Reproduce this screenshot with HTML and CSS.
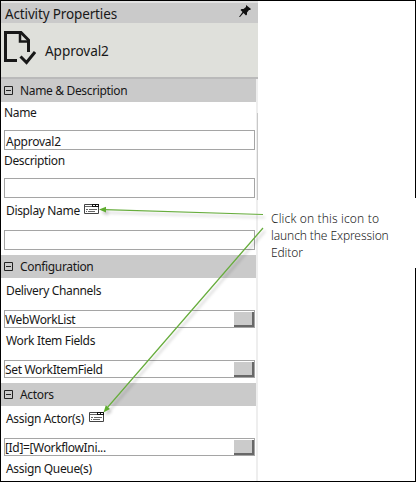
FILE: index.html
```html
<!DOCTYPE html>
<html lang="en">
<head>
<meta charset="utf-8">
<title>Activity Properties</title>
<link rel="stylesheet" href="styles.css">
</head>
<body>
<svg class="defs" width="0" height="0" aria-hidden="true">
  <symbol id="expr" viewBox="0 0 16 11">
    <path d="M.5 .5h14v9H.5z" fill="#fff" stroke="#444"/>
    <path d="M8 .5h7M8 2.500h7M8.500 0v3M11.500 0v3M14.500 0v3" stroke="#111" fill="none"/>
    <path d="M1 2.500h7M2 5.500h2M5 5.500h8M2 7.500h1M4 7.500h7" stroke="#666" fill="none"/>
  </symbol>
  <symbol id="minus" viewBox="0 0 9 9">
    <path d="M.5 .5h8v8h-8zM2 4.500h5" fill="none" stroke="#222"/>
  </symbol>
</svg>
<main class="frame">
  <section class="panel">
    <header class="titlebar">
      <h1 class="title">Activity Properties</h1>
      <svg class="pin" width="12" height="13" viewBox="0 0 12 13"><path d="M7 0l5 4-1 1-1 0-2 2.500v2L7 10.500 4.500 8 1 12 0 12 3.500 7 1.500 5l1-1h2L7 2V0z" fill="#111"/></svg>
    </header>
    <div class="activity">
      <svg class="doc" width="33" height="36" viewBox="0 0 33 36" fill="none" stroke="#181818" stroke-width="3">
        <path d="M14 30.500H2.500V2.500H18L25.500 10V22"/>
        <path d="M17 3v8.500h8" stroke-width="2.500"/>
        <path d="M17.500 26.500L23.500 32.500 32 22"/>
      </svg>
      <span class="activity-name">Approval2</span>
    </div>
    <div class="body">
      <h2 class="section"><svg class="toggle"><use href="#minus"/></svg><span>Name &amp; Description</span></h2>
      <div class="group">
        <div class="label flush"><span>Name</span></div>
        <div class="input"><span class="wide">Approval2</span></div>
        <div class="label flush"><span>Description</span></div>
        <div class="input"></div>
        <div class="label tall"><span>Display Name</span><svg class="expr"><use href="#expr"/></svg></div>
        <div class="input"></div>
      </div>
      <h2 class="section"><svg class="toggle"><use href="#minus"/></svg><span>Configuration</span></h2>
      <div class="group">
        <div class="label tall"><span>Delivery Channels</span></div>
        <div class="picker"><span>WebWorkList</span><button class="more" aria-label="More"></button></div>
        <div class="label tall"><span>Work Item Fields</span></div>
        <div class="picker"><span>Set WorkItemField</span><button class="more" aria-label="More"></button></div>
      </div>
      <h2 class="section"><svg class="toggle"><use href="#minus"/></svg><span>Actors</span></h2>
      <div class="group">
        <div class="label tall actor"><span>Assign Actor(s)</span><svg class="expr"><use href="#expr"/></svg></div>
        <div class="picker"><span>[Id]=[WorkflowIni...</span><button class="more" aria-label="More"></button></div>
        <div class="label tall"><span>Assign Queue(s)</span></div>
      </div>
      <div class="scroll"></div>
    </div>
  </section>
  <aside class="callout"><span class="loose">Click on this icon to</span><br><span>launch the Expression</span><br><span>Editor</span></aside>
  <svg class="arrows" width="416" height="482" viewBox="0 0 416 482">
    <g class="lines">
      <path d="M263 214.500L105 209.700M263 228L107 408" stroke="#68ad3e" stroke-width="1.250" fill="none"/>
      <path d="M99 209.500l7-2.800v5.800zM103.500 412.500l2.300-7.300 4.200 3.800z" fill="#5fac2f"/>
    </g>
  </svg>
</main>
</body>
</html>
```
FILE: styles.css
```css
* { box-sizing: border-box; }
body { margin: 0; background: #fff; color: #181818; font: 12px "Noto Sans", "Open Sans", sans-serif; }
h1, h2 { margin: 0; font-weight: 400; }
span { white-space: nowrap; }
.defs { position: absolute; }
.frame { position: relative; width: 416px; height: 482px; border: 1px solid #000; }
.panel { width: 257px; height: 480px; border-top: 2px solid #e2e2e2; overflow: hidden; letter-spacing: -0.340px; }
.titlebar { display: flex; justify-content: space-between; height: 20px; padding: 0 7px 0 4px; background: #cacaca; }
.title { font-size: 13.500px; line-height: 22px; letter-spacing: -0.140px; white-space: nowrap; }
.pin { margin-top: 2px; }
.activity { display: flex; height: 56px; padding: 7px 0 0 2px; background: #dfe0db; border-bottom: 2px solid #bababa; }
.activity-name { margin-left: 9px; font-size: 13.600px; line-height: 42px; letter-spacing: -0.080px; }
.body { position: relative; height: 402px; padding-right: 2px; }
.body::after { content: ""; position: absolute; top: 0; right: 0; width: 2px; height: 402px; background: #eee; }
.scroll { position: absolute; z-index: 1; top: 34px; right: 0; width: 1px; height: 87px; background: #c8c8c8; }
.section { display: flex; align-items: center; height: 23px; padding-left: 3px; gap: 7px; background: #cacaca; font-size: 12px; line-height: 23px; }
.toggle { width: 9px; height: 9px; flex: none; }
.group { padding: 0 1px 5px 3px; }
.label { display: flex; height: 28px; padding-left: 2px; line-height: 22px; }
.label.flush { padding-left: 0; }
.label.tall { height: 32px; line-height: 26px; }
.expr { width: 16px; height: 11px; margin: 6px 0 0 4px; flex: none; }
.actor .expr { margin-left: 5px; }
.input { height: 20px; padding-left: 1px; border: 1px solid #a5a5a5; background: #fff; line-height: 21px; }
.wide { letter-spacing: -0.240px; }
.picker { display: flex; justify-content: space-between; height: 18px; border: 1px solid #a5a5a5; background: #fff; line-height: 17px; }
.more { width: 20px; height: 15px; margin-top: 1px; padding: 0; border: 0 solid #686868; border-width: 0 2px 2px 0; background: #cbcbcb; }
.arrows { position: absolute; left: -1px; top: -1px; }
.lines { filter: drop-shadow(2px 3px 1.500px rgba(0, 0, 0, .22)); }
.callout { position: absolute; left: 262px; top: 197px; width: 153px; height: 70px; padding: 12px 0 0 8px; background: #fff; color: #222; font-size: 12px; font-weight: 300; line-height: 17px; letter-spacing: -0.100px; }
.loose { letter-spacing: 0.150px; }
```
